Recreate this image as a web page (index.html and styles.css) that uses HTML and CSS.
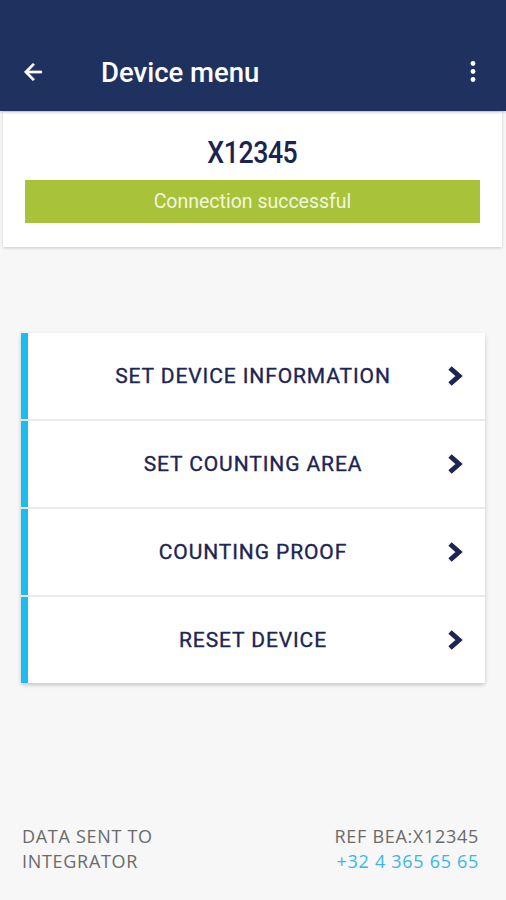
FILE: index.html
```html
<!DOCTYPE html>
<html>
<head>
<meta charset="utf-8">
<link rel="stylesheet" href="styles.css">
</head>
<body>
<div class="app">
  <header class="appbar">
    <svg class="back" width="26" height="26" viewBox="0 0 24 24"><path d="M20 11H7.83l5.59-5.59L12 4l-8 8 8 8 1.41-1.41L7.83 13H20v-2z" fill="#fff" stroke="#fff" stroke-width="0.6"/></svg>
    <h1 class="title">Device menu</h1>
    <svg class="more" width="24" height="24" viewBox="0 0 24 24"><circle cx="12" cy="3.5" r="2.4" fill="#fff"/><circle cx="12" cy="11.5" r="2.4" fill="#fff"/><circle cx="12" cy="19.5" r="2.4" fill="#fff"/></svg>
  </header>
  <section class="status-card">
    <div class="device-id">X12345</div>
    <div class="status-bar">Connection successful</div>
  </section>
  <nav class="menu">
    <div class="menu-item"><span class="label">SET DEVICE INFORMATION</span><svg class="chev" width="16" height="22" viewBox="0 0 16 22"><path d="M3 3 L12 11 L3 19" fill="none" stroke="#1c2553" stroke-width="5" stroke-linejoin="miter" stroke-linecap="butt"/></svg></div>
    <div class="menu-item"><span class="label">SET COUNTING AREA</span><svg class="chev" width="16" height="22" viewBox="0 0 16 22"><path d="M3 3 L12 11 L3 19" fill="none" stroke="#1c2553" stroke-width="5" stroke-linejoin="miter" stroke-linecap="butt"/></svg></div>
    <div class="menu-item"><span class="label">COUNTING PROOF</span><svg class="chev" width="16" height="22" viewBox="0 0 16 22"><path d="M3 3 L12 11 L3 19" fill="none" stroke="#1c2553" stroke-width="5" stroke-linejoin="miter" stroke-linecap="butt"/></svg></div>
    <div class="menu-item"><span class="label">RESET DEVICE</span><svg class="chev" width="16" height="22" viewBox="0 0 16 22"><path d="M3 3 L12 11 L3 19" fill="none" stroke="#1c2553" stroke-width="5" stroke-linejoin="miter" stroke-linecap="butt"/></svg></div>
  </nav>
  <footer class="footer">
    <div class="footer-left">DATA SENT TO<br>INTEGRATOR</div>
    <div class="footer-right">REF BEA:X12345<br><span class="phone">+32 4 365 65 65</span></div>
  </footer>
</div>
</body>
</html>
```
FILE: styles.css
```css
* { box-sizing: border-box; }
html, body { margin: 0; padding: 0; }
body {
  background: #f7f7f7;
  font-family: Roboto, "Liberation Sans", sans-serif;
  width: 506px;
  height: 900px;
  overflow: hidden;
}
.app {
  display: flex;
  flex-direction: column;
  height: 900px;
}
.appbar {
  height: 111px;
  background: #1f315e;
  display: flex;
  align-items: flex-end;
  padding: 0 21px 25px 20px;
  box-shadow: 0 1px 3px rgba(0,0,0,0.25);
  position: relative;
  z-index: 2;
}
.back { width: 26px; height: 26px; margin-bottom: 1px; }
.title {
  margin: 0 0 -1px 55px;
  color: #fff;
  font-size: 27.5px;
  font-weight: 500;
  line-height: 28px;
  flex: 1;
}
.more { width: 24px; height: 24px; margin-bottom: 2px; }
.status-card {
  margin: 1px 4px 0 3px;
  background: #fff;
  height: 135px;
  box-shadow: 0 1px 3px rgba(0,0,0,0.18);
  display: flex;
  flex-direction: column;
  align-items: center;
  padding: 24px 22px 0 22px;
}
.device-id {
  color: #1b2350;
  font-size: 31px;
  font-weight: 500;
  letter-spacing: -0.5px;
  line-height: 34px;
  transform: scaleX(0.86);
}
.status-bar {
  margin-top: 10px;
  width: 455px;
  height: 43px;
  background: #a8c23a;
  color: #f3f6df;
  font-size: 19.5px;
  display: flex;
  align-items: center;
  justify-content: center;
}
.menu {
  margin: 86px 21px 0 21px;
  background: #e9e9ee;
  box-shadow: 0 2px 4px rgba(0,0,0,0.2);
  border-radius: 2px;
  display: flex;
  flex-direction: column;
  gap: 2px;
}
.menu-item {
  height: 86px;
  background: #fff;
  border-left: 7px solid #1bbdf0;
  display: flex;
  align-items: center;
  position: relative;
}
.label {
  flex: 1;
  text-align: center;
  margin-left: -7px;
  color: #1c2553;
  font-size: 21px;
  font-weight: 400;
  letter-spacing: 0.9px;
  -webkit-text-stroke: 0.35px #1c2553;
}
.chev {
  position: absolute;
  right: 22px;
  top: 32px;
}
.footer {
  margin-top: auto;
  padding: 0 27px 26px 22px;
  display: flex;
  justify-content: space-between;
  font-family: "Open Sans", "Noto Sans", sans-serif;
  font-size: 18px;
  line-height: 25px;
  letter-spacing: 0.7px;
  color: #6a6a6a;
}
.footer-right { text-align: right; }
.phone { color: #38b6ea; }
```
